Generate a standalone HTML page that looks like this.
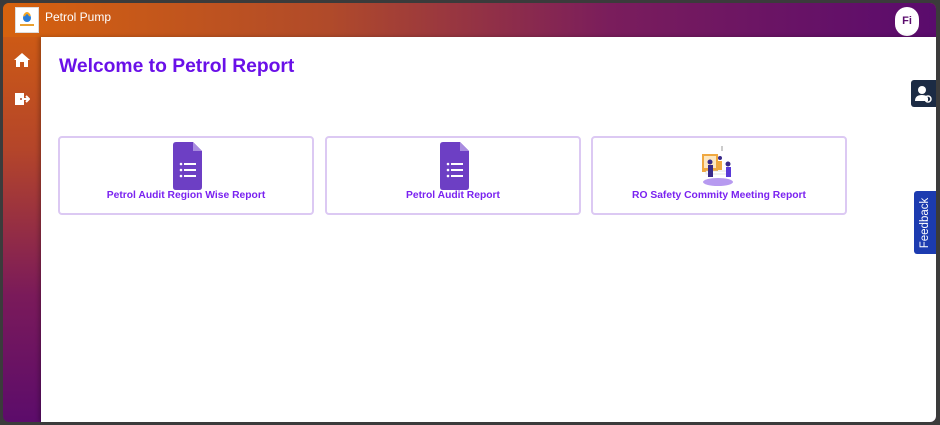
<!DOCTYPE html>
<html><head><meta charset="utf-8"><style>
*{margin:0;padding:0;box-sizing:border-box}
body{width:940px;height:425px;background:#3b3b3b;font-family:"Liberation Sans",sans-serif;overflow:hidden;position:relative}
.frame{position:absolute;left:3px;top:3px;width:933px;height:419px;border-radius:6px;overflow:hidden;background:linear-gradient(180deg,#d4600f 0%,#b4452a 35%,#7a1a5a 70%,#5c0c6b 100%)}
.hdr{position:absolute;left:0;top:0;width:933px;height:34px;background:linear-gradient(90deg,#d6620e 0%,#b04a2a 35%,#7a1d5c 65%,#5a0b6d 100%)}
.logo{position:absolute;left:12px;top:4px;width:24px;height:26px;background:#fff;border:1px solid #ddd}
.title{position:absolute;left:42px;top:7px;color:#fff;font-size:12px}
.av{position:absolute;left:892px;top:4px;width:24px;height:29px;border-radius:12px;background:#fff;color:#5a0b6d;font-weight:bold;font-size:11px;text-align:center;line-height:29px}
.main{position:absolute;left:38px;top:34px;width:895px;height:385px;background:#fff;box-shadow:-2px 0 4px rgba(0,0,0,.25)}
h1{position:absolute;left:18px;top:19px;font-size:19.3px;color:#6a10e8;font-weight:bold}
.card{position:absolute;top:99px;width:256px;height:79px;border:2px solid #dcc9f3;border-radius:4px;text-align:center}
.card span{position:absolute;left:0;right:0;top:52px;font-size:10.3px;font-weight:bold;color:#7a22f0}
.card svg{position:absolute;left:113px;top:4px}
.ub{position:absolute;left:908px;top:77px;width:25px;height:27px;background:#1c2b44;border-radius:3px 0 0 3px}
.fb{position:absolute;left:911px;top:188px;width:22px;height:63px;background:#1c3bb0;border-radius:3px 0 0 3px}
.fb span{position:absolute;left:50%;top:50%;transform:translate(-50%,-50%) rotate(-90deg);color:#fff;font-size:11.5px}
</style></head><body>
<div class="frame">
<div class="hdr"><div class="logo"><svg width="22" height="24"><circle cx="11" cy="10" r="4" fill="#2a7bd6"/><path d="M8 8 Q11 2 14 8" stroke="#f5a623" fill="none" stroke-width="2"/><rect x="4" y="16" width="14" height="2" fill="#e8a030"/></svg></div>
<div class="title">Petrol Pump</div><div class="av">Fi</div></div>
<svg style="position:absolute;left:10px;top:49px" width="18" height="16"><path d="M9 1 L1 8 H3 V15 H7 V10 H11 V15 H15 V8 H17 Z" fill="#fff"/></svg>
<svg style="position:absolute;left:11px;top:89px" width="16" height="14"><rect x="1" y="1" width="9" height="12" fill="#fff"/><path d="M9 7 H15 M12 4 L15 7 L12 10" stroke="#fff" stroke-width="2" fill="none"/><circle cx="7" cy="7" r="1" fill="#b04a2a"/></svg>
<div class="main">
<h1>Welcome to Petrol Report</h1>
<div class="card" style="left:17px"><svg width="30" height="48" viewBox="0 0 30 48"><path d="M3 0 H20 L29 9 V45 Q29 48 26 48 H3 Q0 48 0 45 V3 Q0 0 3 0Z" fill="#6d3fc4"/><path d="M20 0 L29 9 H20Z" fill="#a98ce0"/><g fill="#fff"><circle cx="8" cy="22" r="1.3"/><circle cx="8" cy="28" r="1.3"/><circle cx="8" cy="34" r="1.3"/><rect x="11" y="21" width="12" height="2"/><rect x="11" y="27" width="12" height="2"/><rect x="11" y="33" width="12" height="2"/></g></svg><span>Petrol Audit Region Wise Report</span></div>
<div class="card" style="left:284px"><svg width="30" height="48" viewBox="0 0 30 48"><path d="M3 0 H20 L29 9 V45 Q29 48 26 48 H3 Q0 48 0 45 V3 Q0 0 3 0Z" fill="#6d3fc4"/><path d="M20 0 L29 9 H20Z" fill="#a98ce0"/><g fill="#fff"><circle cx="8" cy="22" r="1.3"/><circle cx="8" cy="28" r="1.3"/><circle cx="8" cy="34" r="1.3"/><rect x="11" y="21" width="12" height="2"/><rect x="11" y="27" width="12" height="2"/><rect x="11" y="33" width="12" height="2"/></g></svg><span>Petrol Audit Report</span></div>
<div class="card" style="left:550px"><svg width="36" height="42" viewBox="0 0 36 42" style="left:107px;top:8px"><ellipse cx="18" cy="36" rx="15" ry="4" fill="#b79af0"/><rect x="2" y="8" width="16" height="18" fill="#f0a840"/><rect x="4" y="10" width="12" height="12" fill="#fde7c0"/><rect x="6" y="25" width="22" height="3" fill="#fff" stroke="#ccc" stroke-width=".5"/><circle cx="10" cy="16" r="2.5" fill="#3a2a8a"/><rect x="8" y="19" width="5" height="12" fill="#3a2a8a"/><circle cx="28" cy="18" r="2.5" fill="#3a2a8a"/><rect x="26" y="21" width="5" height="10" fill="#5a3ad8"/><circle cx="20" cy="12" r="2" fill="#3a2a8a"/><rect x="18" y="15" width="4" height="9" fill="#f0a840"/><line x1="22" y1="0" x2="22" y2="5" stroke="#999"/></svg><span>RO Safety Commity Meeting Report</span></div>
</div>
<div class="ub"><svg width="25" height="27"><circle cx="11" cy="10" r="4" fill="#fff"/><path d="M4 21 Q4 15 11 15 Q16 15 17 18 V21Z" fill="#fff"/><circle cx="17" cy="19" r="3" fill="none" stroke="#fff" stroke-width="1.5"/></svg></div>
<div class="fb"><span>Feedback</span></div>
</div>
</body></html>
